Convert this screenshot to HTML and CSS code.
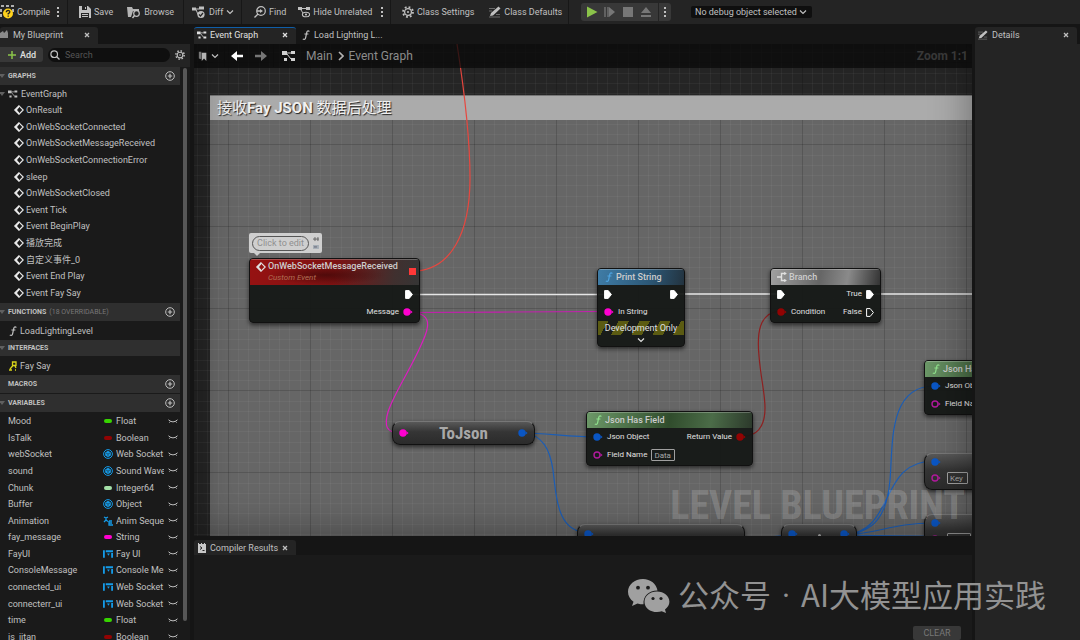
FILE: index.html
```html
<!DOCTYPE html>
<html lang="en">
<head>
    <meta charset="UTF-8">
    <meta name="viewport" content="width=device-width, initial-scale=1.0">
    <title>Level Blueprint</title>
    <link rel="stylesheet" href="styles.css">
</head>
<body>
    <svg class="defs" aria-hidden="true">
        <symbol id="close" viewBox="0 0 6 6"><path d="M1 1l4 4M5 1L1 5" stroke="currentColor" stroke-width="1.3"/></symbol>
        <symbol id="chevron" viewBox="0 0 8 6"><path d="M1 1.5l3 3 3-3" fill="none" stroke="currentColor" stroke-width="1.2"/></symbol>
        <symbol id="dots" viewBox="0 0 4 12"><path d="M1 1h2v2H1zM1 5h2v2H1zM1 9h2v2H1z" fill="currentColor"/></symbol>
        <symbol id="plus-circle" viewBox="0 0 10 10"><circle cx="5" cy="5" r="4.3" fill="none" stroke="currentColor" stroke-width="1"/><path d="M5 2.8v4.4M2.8 5h4.4" stroke="currentColor" stroke-width="1.2"/></symbol>
        <symbol id="event" viewBox="0 0 10 10"><path d="M5 .8L9.2 5 5 9.2.8 5z" fill="none" stroke="currentColor" stroke-width="1.2"/><path d="M5 .4L.4 5 5 9.6V7.2L3.4 5.8V4.2L5 2.8z" fill="currentColor"/></symbol>
        <symbol id="graph" viewBox="0 0 14 12"><path d="M0 1h5v4H0zM9 1h4v3H9zM9 8h4v3H9zM2 8h3v3H2z" fill="currentColor"/><path d="M5 3h4M5 4l4 5" stroke="currentColor" stroke-width="1"/></symbol>
        <symbol id="func" viewBox="0 0 8 10"><path d="M7.4 1.4C6 .4 5 1 4.7 2.6L3.6 7.8C3.3 9.3 2.2 9.8.8 9M2.4 4h4" fill="none" stroke="currentColor" stroke-width="1.2"/></symbol>
        <symbol id="gear" viewBox="0 0 12 12"><circle cx="6" cy="6" r="3.4" fill="none" stroke="currentColor" stroke-width="1.3"/><circle cx="6" cy="6" r="5" fill="none" stroke="currentColor" stroke-width="1.8" stroke-dasharray="1.8 2.13"/><circle cx="6" cy="6" r="1" fill="currentColor"/></symbol>
        <symbol id="pencil" viewBox="0 0 12 12"><path d="M1 10l1-3L9.5.5l2 2L4 9.5z" fill="currentColor"/><path d="M0 2.5h6M0 5h3M0 11h11M7 8.5h4" stroke="currentColor" stroke-width="1" opacity=".45"/></symbol>
        <symbol id="eye" viewBox="0 0 10 5"><path d="M.5.8Q5 5 9.5.8M2.4 2.4L1.4 3.6M7.6 2.4l1 1.2" fill="none" stroke="currentColor" stroke-width="1"/></symbol>
        <symbol id="object" viewBox="0 0 10 10"><circle cx="5" cy="5" r="4.4" fill="none" stroke="currentColor" stroke-width="1"/><path d="M5 1.8l2.8 1.6v3.2L5 8.2 2.2 6.6V3.4z" fill="currentColor"/><path d="M3 4l2 1 2-1M5 5v2.3" fill="none" stroke="#1a1a1a" stroke-width=".5"/></symbol>
        <symbol id="widget" viewBox="0 0 11 8"><path d="M0 0h2v8H0zM3 0h8v2H3zM9 3h2v5H9z" fill="currentColor"/><path d="M4.5 3.5h3L6 6z" fill="currentColor"/></symbol>
        <symbol id="anim" viewBox="0 0 10 10"><path d="M1 1l2 1 2-1M3 2v2L1 6M3 4l2 1.5M6 5h3M6 5v4h4M6 7h3" fill="none" stroke="currentColor" stroke-width="1.3"/></symbol>
        <symbol id="exec" viewBox="0 0 8 9"><path d="M.6.6h3.6L7.4 4.5 4.2 8.4H.6z" stroke="#fff" stroke-width="1"/></symbol>
        <symbol id="pin" viewBox="0 0 10 8"><circle cx="4" cy="4" r="3.7" fill="currentColor"/><path d="M7.5 2.2L9.6 4 7.5 5.8z" fill="currentColor"/></symbol>
        <symbol id="pin-open" viewBox="0 0 10 8"><circle cx="4" cy="4" r="3" fill="none" stroke="currentColor" stroke-width="1.4"/><path d="M7.5 2.2L9.6 4 7.5 5.8z" fill="currentColor"/></symbol>
        <symbol id="branch" viewBox="0 0 10 10"><path d="M0 5h4M9 1.5H4.5v7H9" fill="none" stroke="currentColor" stroke-width="1.4"/><path d="M7 0l3 1.5L7 3zM7 7l3 1.5L7 10z" fill="currentColor"/></symbol>
        <symbol id="arrow" viewBox="0 0 12 10"><path d="M6 0L0 5l6 5V6.3h6V3.7H6z" fill="currentColor"/></symbol>
    </svg>

    <div class="editor">
        <header class="toolbar">
            <div class="toolbar__group toolbar__group_compile">
                <button class="tool"><svg class="icon icon_14" viewBox="0 0 14 14"><path d="M1 1h3M6 1h3M11 1h3M1 4v3M1 9v3M13 4v3" stroke="#b0b0b0" stroke-width="2"/><circle cx="8" cy="8.5" r="5" fill="#ffd21c"/><path d="M6.3 7.2q0-1.7 1.8-1.7t1.7 1.5q0 .9-1.6 1.7v.7M8.2 10.5v1.3" fill="none" stroke="#222" stroke-width="1.3"/></svg>Compile</button>
                <button class="tool tool_more" aria-label="Compile options"><svg class="icon icon_dots"><use href="#dots"/></svg></button>
            </div>
            <div class="toolbar__group toolbar__group_file">
                <button class="tool"><svg class="icon icon_12" viewBox="0 0 12 12"><path d="M0 0h9l3 3v9H0z" fill="#c0c0c0"/><path d="M3 0h5v4H3zM2 7h8v5H2z" fill="#242424"/><path d="M6 1h1v2H6zM3 8h6v1H3zM3 10h6v1H3z" fill="#c0c0c0"/></svg>Save</button>
                <button class="tool"><svg class="icon icon_14" viewBox="0 0 14 12"><path d="M0 1h5l1 2h6v2H6L4 11H1z" fill="#b4b4b4"/><circle cx="9.5" cy="7.5" r="2.8" fill="none" stroke="#c0c0c0" stroke-width="1.2"/><path d="M7.5 9.5L5.5 12" stroke="#c0c0c0" stroke-width="1.5"/></svg>Browse</button>
            </div>
            <div class="toolbar__group toolbar__group_diff">
                <button class="tool"><svg class="icon icon_14" viewBox="0 0 14 13"><path d="M0 2h4v3H0zM7 1h5v3H7z" fill="#c0c0c0"/><path d="M4 3.5h3M4 4l2 5" stroke="#c0c0c0"/><circle cx="9" cy="9" r="3.6" fill="#c0c0c0"/><path d="M7 9l1.5 1.5L11 7.5" fill="none" stroke="#242424" stroke-width="1.2"/></svg>Diff<svg class="icon icon_chevron"><use href="#chevron"/></svg></button>
            </div>
            <div class="toolbar__group toolbar__group_find">
                <button class="tool"><svg class="icon icon_12" viewBox="0 0 12 12"><circle cx="7" cy="5" r="4.3" fill="none" stroke="#c0c0c0" stroke-width="1.2"/><path d="M4 8L.5 11.5M3 5h4" stroke="#c0c0c0" stroke-width="1.4"/><path d="M6 3l3 2-3 2z" fill="#c0c0c0"/></svg>Find</button>
                <button class="tool"><svg class="icon icon_12" viewBox="0 0 12 12"><path d="M0 1h4v3H0zM8 1h4v3H8z" fill="#c0c0c0"/><path d="M4 2.5h4M3 4l2 3" stroke="#c0c0c0"/><ellipse cx="8" cy="8.5" rx="3.6" ry="2.3" fill="none" stroke="#c0c0c0" stroke-width="1.1"/><circle cx="8" cy="8.5" r="1.1" fill="#c0c0c0"/></svg>Hide Unrelated</button>
                <button class="tool tool_more" aria-label="Hide options"><svg class="icon icon_dots"><use href="#dots"/></svg></button>
            </div>
            <div class="toolbar__group toolbar__group_class">
                <button class="tool"><svg class="icon icon_12"><use href="#gear"/></svg>Class Settings</button>
                <button class="tool"><svg class="icon icon_12"><use href="#pencil"/></svg>Class Defaults</button>
            </div>
            <div class="play">
                <button class="play__button play__button_on" aria-label="Play"><svg class="icon icon_12" viewBox="0 0 12 12"><path d="M1 .5L11.5 6 1 11.5z" fill="currentColor"/></svg></button>
                <button class="play__button" aria-label="Step"><svg class="icon icon_12" viewBox="0 0 12 12"><path d="M1 1v10M4 1v10" stroke="currentColor" stroke-width="1.3"/><path d="M5 1l6 5-6 5z" fill="currentColor"/></svg></button>
                <button class="play__button" aria-label="Stop"><svg class="icon icon_12" viewBox="0 0 12 12"><path d="M1 1h10v10H1z" fill="currentColor"/></svg></button>
                <button class="play__button" aria-label="Eject"><svg class="icon icon_12" viewBox="0 0 12 12"><path d="M6 1l5 6H1zM1 9h10v2H1z" fill="currentColor"/></svg></button>
                <button class="play__button play__button_more" aria-label="Play options"><svg class="icon icon_dots"><use href="#dots"/></svg></button>
            </div>
            <div class="debug">
                <select class="debug__select" aria-label="Debug object"><option>No debug object selected</option></select>
                <svg class="icon icon_chevron"><use href="#chevron"/></svg>
            </div>
        </header>

        <div class="workspace">
            <aside class="blueprint">
                <div class="tabs">
                    <div class="tab tab_blueprint"><svg class="icon icon_10" viewBox="0 0 10 10"><path d="M0 3l3-2 1 2 3-3 1 3v5H0z" fill="#8a8a8a"/></svg><span class="tab__name">My Blueprint</span><button class="tab__close" aria-label="Close My Blueprint"><svg class="icon icon_6"><use href="#close"/></svg></button></div>
                </div>
                <div class="search">
                    <button class="search__add"><svg class="icon icon_10" viewBox="0 0 10 10"><path d="M5 1v8M1 5h8" stroke="#8bc34a" stroke-width="1.5"/></svg>Add</button>
                    <label class="search__box"><svg class="icon icon_10" viewBox="0 0 10 10"><circle cx="4.2" cy="4.2" r="3.3" fill="none" stroke="#c0c0c0" stroke-width="1.2"/><path d="M6.7 6.7L9.5 9.5" stroke="#c0c0c0" stroke-width="1.3"/></svg><input class="search__input" type="text" placeholder="Search" aria-label="Search"></label>
                    <button class="round" aria-label="View options"><svg class="icon icon_10"><use href="#gear"/></svg></button>
                </div>
                <div class="outline">
                    <div class="outline__list">
                        <h2 class="section"><span class="section__arrow"></span>GRAPHS<button class="round" aria-label="Add graph"><svg class="icon icon_10"><use href="#plus-circle"/></svg></button></h2>
                        <p class="entry entry_root"><span class="section__arrow"></span><svg class="icon icon_10"><use href="#graph"/></svg>EventGraph</p>
                        <ul class="events">
                            <li class="entry entry_event"><svg class="icon icon_10"><use href="#event"/></svg>OnResult</li>
                            <li class="entry entry_event"><svg class="icon icon_10"><use href="#event"/></svg>OnWebSocketConnected</li>
                            <li class="entry entry_event"><svg class="icon icon_10"><use href="#event"/></svg>OnWebSocketMessageReceived</li>
                            <li class="entry entry_event"><svg class="icon icon_10"><use href="#event"/></svg>OnWebSocketConnectionError</li>
                            <li class="entry entry_event"><svg class="icon icon_10"><use href="#event"/></svg>sleep</li>
                            <li class="entry entry_event"><svg class="icon icon_10"><use href="#event"/></svg>OnWebSocketClosed</li>
                            <li class="entry entry_event"><svg class="icon icon_10"><use href="#event"/></svg>Event Tick</li>
                            <li class="entry entry_event"><svg class="icon icon_10"><use href="#event"/></svg>Event BeginPlay</li>
                            <li class="entry entry_event"><svg class="icon icon_10"><use href="#event"/></svg>播放完成</li>
                            <li class="entry entry_event"><svg class="icon icon_10"><use href="#event"/></svg>自定义事件_0</li>
                            <li class="entry entry_event"><svg class="icon icon_10"><use href="#event"/></svg>Event End Play</li>
                            <li class="entry entry_event"><svg class="icon icon_10"><use href="#event"/></svg>Event Fay Say</li>
                        </ul>
                        <h2 class="section"><span class="section__arrow"></span>FUNCTIONS <span class="section__note">(18 OVERRIDABLE)</span><button class="round" aria-label="Add function"><svg class="icon icon_10"><use href="#plus-circle"/></svg></button></h2>
                        <p class="entry entry_item"><svg class="icon icon_8"><use href="#func"/></svg>LoadLightingLevel</p>
                        <h2 class="section section_small"><span class="section__arrow"></span>INTERFACES</h2>
                        <p class="entry entry_item"><svg class="icon icon_8" viewBox="0 0 8 10"><path d="M3.5 1H7v3.5H3.5zM4 4.5L1 8M6 5l1 2M0 9h3M6 9h1" fill="none" stroke="#d8d41a" stroke-width="1.3"/></svg>Fay Say</p>
                        <h2 class="section"><span class="section__arrow section__arrow_none"></span>MACROS<button class="round" aria-label="Add macro"><svg class="icon icon_10"><use href="#plus-circle"/></svg></button></h2>
                        <h2 class="section"><span class="section__arrow"></span>VARIABLES<button class="round" aria-label="Add variable"><svg class="icon icon_10"><use href="#plus-circle"/></svg></button></h2>
                        <ul class="variables">
                            <li class="variable"><span>Mood</span><i class="pill pill_float"></i><span class="variable__type">Float</span><svg class="icon icon_eye"><use href="#eye"/></svg></li>
                            <li class="variable"><span>IsTalk</span><i class="pill pill_bool"></i><span class="variable__type">Boolean</span><svg class="icon icon_eye"><use href="#eye"/></svg></li>
                            <li class="variable"><span>webSocket</span><svg class="icon icon_10 blue"><use href="#object"/></svg><span class="variable__type">Web Socket</span><svg class="icon icon_eye"><use href="#eye"/></svg></li>
                            <li class="variable"><span>sound</span><svg class="icon icon_10 blue"><use href="#object"/></svg><span class="variable__type">Sound Wave</span><svg class="icon icon_eye"><use href="#eye"/></svg></li>
                            <li class="variable"><span>Chunk</span><i class="pill pill_int"></i><span class="variable__type">Integer64</span><svg class="icon icon_eye"><use href="#eye"/></svg></li>
                            <li class="variable"><span>Buffer</span><svg class="icon icon_10 blue"><use href="#object"/></svg><span class="variable__type">Object</span><svg class="icon icon_eye"><use href="#eye"/></svg></li>
                            <li class="variable"><span>Animation</span><svg class="icon icon_10 blue"><use href="#anim"/></svg><span class="variable__type">Anim Seque</span><svg class="icon icon_eye"><use href="#eye"/></svg></li>
                            <li class="variable"><span>fay_message</span><i class="pill pill_string"></i><span class="variable__type">String</span><svg class="icon icon_eye"><use href="#eye"/></svg></li>
                            <li class="variable"><span>FayUI</span><svg class="icon icon_10 blue"><use href="#widget"/></svg><span class="variable__type">Fay UI</span><svg class="icon icon_eye"><use href="#eye"/></svg></li>
                            <li class="variable"><span>ConsoleMessage</span><svg class="icon icon_10 blue"><use href="#widget"/></svg><span class="variable__type">Console Me</span><svg class="icon icon_eye"><use href="#eye"/></svg></li>
                            <li class="variable"><span>connected_ui</span><svg class="icon icon_10 blue"><use href="#widget"/></svg><span class="variable__type">Web Socket</span><svg class="icon icon_eye"><use href="#eye"/></svg></li>
                            <li class="variable"><span>connecterr_ui</span><svg class="icon icon_10 blue"><use href="#widget"/></svg><span class="variable__type">Web Socket</span><svg class="icon icon_eye"><use href="#eye"/></svg></li>
                            <li class="variable"><span>time</span><i class="pill pill_float"></i><span class="variable__type">Float</span><svg class="icon icon_eye"><use href="#eye"/></svg></li>
                            <li class="variable"><span>is_jitan</span><i class="pill pill_bool"></i><span class="variable__type">Boolean</span><svg class="icon icon_eye"><use href="#eye"/></svg></li>
                        </ul>
                    </div>
                    <div class="scroll"><div class="scroll__thumb"></div></div>
                </div>
            </aside>

            <main class="center">
                <div class="tabs">
                    <div class="tab tab_active"><svg class="icon icon_10"><use href="#graph"/></svg><span class="tab__name">Event Graph</span><button class="tab__close" aria-label="Close Event Graph"><svg class="icon icon_6"><use href="#close"/></svg></button></div>
                    <div class="tab tab_plain"><svg class="icon icon_8"><use href="#func"/></svg><span class="tab__name">Load Lighting L...</span></div>
                </div>
                <section class="canvas">
                    <svg class="canvas__layer">
                        <defs>
                            <pattern id="grid" x="34" y="18" width="82" height="82" patternUnits="userSpaceOnUse">
                                <path d="M10.5 0v82M20.5 0v82M31.5 0v82M41.5 0v82M51.5 0v82M61.5 0v82M72.5 0v82M0 11.5h82M0 21.5h82M0 31.5h82M0 41.5h82M0 52.5h82M0 62.5h82M0 72.5h82" stroke="#fff" stroke-opacity=".04"/>
                                <path d="M.5 0v82M0 .5h82" stroke="#000" stroke-opacity=".16"/>
                            </pattern>
                        </defs>
                        <rect width="100%" height="100%" fill="#262626"/>
                        <rect x="16" y="51" width="100%" height="100%" fill="#666"/>
                        <rect width="100%" height="100%" fill="url(#grid)"/>
                    </svg>
                    <h1 class="comment">接收<b>Fay JSON</b> 数据后处理</h1>
                    <!-- wires between the pins -->
                    <svg class="canvas__layer">
                        <g transform="translate(-194 -44)" fill="none" stroke-width="1.2">
                            <path d="M457 44C462 76 470 130 470 178C470 235 450 268 417 271" stroke="#e8473f"/>
                            <path d="M410 294.5H604M676 294H778M873 294H1400" stroke="#e6e6e6" stroke-width="1.6"/>
                            <path d="M409 312.5C480 312.5 530 311.5 604 311.5" stroke="#c51fae"/>
                            <path d="M409 312C434 313 429 328 422 343C411 369 394 393 388 412C384 426 386 433 401 433" stroke="#dd1cc0"/>
                            <path d="M781 311C758 312 757 335 759 356C761 380 765 393 765 408C765 428 756 437 741 436" stroke="#8e2020"/>
                            <path d="M522 433C545 433 570 437 597 437M522 433C543 434 550 450 553 470C557 505 559 533 590 533" stroke="#1b5db5"/>
                            <path d="M843 535C875 533 887 515 890 480C893 445 888 386 934 386M843 535C897 533 877 461 934 461M843 535C880 534 890 523 934 523M843 535L972 537M770 537L790 535" stroke="#1b5db5"/>
                        </g>
                    </svg>

                    <div class="bubble"><button class="bubble__edit">Click to edit</button><svg class="bubble__icons" viewBox="0 0 6 16"><path d="M0 4h6M2 2v4M5 2v4" stroke="#666"/><path d="M0 10h6v4H0z" fill="#a4adb5"/><path d="M1 12h3" stroke="#667"/></svg></div>

                    <article class="node node_message">
                        <header class="node__head node__head_event">
                            <svg class="icon icon_10"><use href="#event"/></svg>
                            <div class="node__titles"><h3 class="node__title">OnWebSocketMessageReceived</h3><p class="node__sub">Custom Event</p></div>
                            <i class="delegate"></i>
                        </header>
                        <div class="node__row node__row_out"><svg class="icon icon_exec"><use href="#exec"/></svg></div>
                        <div class="node__row node__row_out"><span>Message</span><svg class="icon icon_pin pink"><use href="#pin"/></svg></div>
                    </article>

                    <article class="node node_print">
                        <header class="node__head node__head_print"><svg class="icon icon_10 sky"><use href="#func"/></svg><h3 class="node__title">Print String</h3></header>
                        <div class="node__row"><svg class="icon icon_exec"><use href="#exec"/></svg><svg class="icon icon_exec push"><use href="#exec"/></svg></div>
                        <div class="node__row"><svg class="icon icon_pin pink"><use href="#pin"/></svg><span>In String</span></div>
                        <p class="node__dev">Development Only</p>
                        <button class="node__more" aria-label="Show more"><svg class="icon icon_chevron"><use href="#chevron"/></svg></button>
                    </article>

                    <article class="node node_branch">
                        <header class="node__head node__head_branch"><svg class="icon icon_10"><use href="#branch"/></svg><h3 class="node__title">Branch</h3></header>
                        <div class="node__row"><svg class="icon icon_exec"><use href="#exec"/></svg><span class="push">True</span><svg class="icon icon_exec"><use href="#exec"/></svg></div>
                        <div class="node__row"><svg class="icon icon_pin red"><use href="#pin"/></svg><span>Condition</span><span class="push">False</span><svg class="icon icon_exec icon_empty"><use href="#exec"/></svg></div>
                    </article>

                    <article class="node node_compact node_tojson">
                        <svg class="icon icon_pin pink"><use href="#pin"/></svg><h3 class="node__big">ToJson</h3><svg class="icon icon_pin navy"><use href="#pin"/></svg>
                    </article>

                    <article class="node node_field">
                        <header class="node__head node__head_pure"><svg class="icon icon_10 green"><use href="#func"/></svg><h3 class="node__title">Json Has Field</h3></header>
                        <div class="node__row"><svg class="icon icon_pin navy"><use href="#pin"/></svg><span>Json Object</span><span class="push">Return Value</span><svg class="icon icon_pin red"><use href="#pin"/></svg></div>
                        <div class="node__row"><svg class="icon icon_pin purple"><use href="#pin-open"/></svg><label for="field-name">Field Name</label><input class="node__input" id="field-name" value="Data"></div>
                    </article>

                    <article class="node node_field2">
                        <header class="node__head node__head_pure"><svg class="icon icon_10 green"><use href="#func"/></svg><h3 class="node__title">Json Has Field</h3></header>
                        <div class="node__row"><svg class="icon icon_pin navy"><use href="#pin"/></svg><span>Json Object</span></div>
                        <div class="node__row"><svg class="icon icon_pin purple"><use href="#pin-open"/></svg><span>Field Name</span></div>
                    </article>

                    <article class="node node_compact node_key">
                        <div class="node__row"><svg class="icon icon_pin navy"><use href="#pin"/></svg></div>
                        <div class="node__row"><svg class="icon icon_pin purple"><use href="#pin-open"/></svg><input class="node__input node__input_key" value="Key" aria-label="Key"></div>
                    </article>

                    <article class="node node_compact node_key node_key2">
                        <div class="node__row"><svg class="icon icon_pin navy"><use href="#pin"/></svg></div>
                        <div class="node__row"><svg class="icon icon_pin purple"><use href="#pin-open"/></svg><input class="node__input" aria-label="Key"></div>
                    </article>

                    <article class="node node_compact node_wide"><svg class="icon icon_pin navy"><use href="#pin"/></svg></article>
                    <article class="node node_compact node_dot"><svg class="icon icon_pin navy"><use href="#pin"/></svg><i class="node__dot"></i><svg class="icon icon_pin navy"><use href="#pin"/></svg></article>

                    <div class="vignette"></div>
                    <p class="canvas__mark">LEVEL BLUEPRINT</p>
                    <nav class="crumbs">
                        <button class="crumbs__button crumbs__button_mark" aria-label="Bookmarks"><svg class="icon icon_10" viewBox="0 0 10 12"><path d="M0 1h3v9L0 9z" fill="#777"/><path d="M3.5 2H9v10L6.2 9l-2.7 3z" fill="#b4b4b4"/></svg><svg class="icon icon_chevron"><use href="#chevron"/></svg></button>
                        <button class="crumbs__button crumbs__button_back" aria-label="Back"><svg class="icon icon_12"><use href="#arrow"/></svg></button>
                        <button class="crumbs__button crumbs__button_next" aria-label="Forward"><svg class="icon icon_12 flip"><use href="#arrow"/></svg></button>
                        <span class="crumbs__path"><svg class="icon icon_14"><use href="#graph"/></svg><a class="crumbs__link" href="#main">Main</a><svg class="icon icon_next" viewBox="0 0 6 10"><path d="M1 1l4 4-4 4" fill="none" stroke="#b4b4b4" stroke-width="1.6"/></svg><a class="crumbs__link" href="#graph">Event Graph</a></span>
                        <span class="crumbs__zoom">Zoom 1:1</span>
                    </nav>
                </section>
                <section class="results">
                    <div class="tabs tabs_results">
                        <div class="tab tab_results"><svg class="icon icon_10" viewBox="0 0 10 10"><path d="M1 0h1v1h2V0h1v1h2V0h1v1h1v9H1z" fill="#c8c8c8"/><path d="M3 3.5l2 1.5-2 1.5M5.5 7.5h2" fill="none" stroke="#222"/></svg><span class="tab__name">Compiler Results</span><button class="tab__close" aria-label="Close Compiler Results"><svg class="icon icon_6"><use href="#close"/></svg></button></div>
                    </div>
                    <div class="results__body"><button class="results__clear">CLEAR</button></div>
                </section>
            </main>

            <aside class="details">
                <div class="tabs">
                    <div class="tab tab_details"><svg class="icon icon_10"><use href="#pencil"/></svg><span class="tab__name">Details</span><button class="tab__close" aria-label="Close Details"><svg class="icon icon_6"><use href="#close"/></svg></button></div>
                </div>
                <div class="details__body"></div>
            </aside>
        </div>
        <div class="account">
            <svg class="account__logo" viewBox="0 0 42 34"><path d="M15 0C6.5 0 0 5.7 0 12.8c0 4 2 7.5 5.5 9.9L4 27l5.5-2.6c2 .6 4 .8 6 .8C15 17 21 11.5 29.5 11.6 28.5 5 22.5 0 15 0z" fill="currentColor"/><path d="M29 12.5c-7.2 0-12.5 4.6-12.5 10.4S22 33 29 33c1.7 0 3.3-.2 4.8-.7L38 34l-1-3.6c2.7-2 4.4-4.7 4.4-7.7 0-5.7-5.4-10.2-12.4-10.2z" fill="currentColor"/><g fill="#1c1c1c"><circle cx="10" cy="8.7" r="1.9"/><circle cx="20" cy="8.7" r="1.9"/><circle cx="25" cy="19.5" r="1.6"/><circle cx="33" cy="19.5" r="1.6"/></g></svg>
            <span>公众号 <span class="account__dot">·</span> AI大模型应用实践</span>
        </div>
    </div>
</body>
</html>
```
FILE: styles.css
```css
body {
    margin: 0;
    font-family: Roboto, "Noto Sans CJK SC", sans-serif;
    font-size: 9px;
    line-height: 16px;
    color: #c0c0c0;
    background-color: #151515;
}

h1, h2, h3, p, ul {
    margin: 0;
    padding: 0;
    font-size: inherit;
    font-weight: 400;
}

ul {
    list-style-type: none;
}

a {
    text-decoration: none;
}

button, input, select {
    margin: 0;
    padding: 0;
    border: 0;
    background: none;
    color: inherit;
    font: inherit;
}

button {
    display: flex;
    align-items: center;
}

/* icons */

.defs {
    position: absolute;
    width: 0;
    height: 0;
}

.icon {
    flex: none;
    display: block;
}

.icon_6 { width: 6px; height: 6px; }
.icon_8 { width: 8px; height: 10px; }
.icon_10 { width: 10px; height: 10px; }
.icon_12 { width: 12px; height: 12px; }
.icon_14 { width: 14px; height: 14px; }
.icon_dots { width: 4px; height: 12px; }
.icon_chevron { width: 8px; height: 6px; }
.icon_next { width: 6px; height: 10px; }
.icon_eye { width: 10px; height: 5px; }
.icon_exec { width: 8px; height: 9px; fill: #fff; }
.icon_pin { width: 10px; height: 8px; }
.icon_empty { fill: none; }

.blue { color: #159be8; }
.pink { color: #ff00d0; }
.purple { color: #b01a9c; }
.red { color: #920303; }
.navy { color: #0a56c4; }
.sky { color: #4da3e0; }
.green { color: #8fe08c; }

.push { margin-left: auto; }
.flip { transform: scaleX(-1); }

/* page */

.editor {
    display: flex;
    flex-direction: column;
    height: 100vh;
    overflow: hidden;
}

.toolbar {
    display: flex;
    align-items: center;
    flex: none;
    height: 24px;
    background-color: #242424;
}

.toolbar__group {
    display: flex;
    align-items: center;
    height: 24px;
    box-sizing: border-box;
    border-right: 1px solid #171717;
}

.toolbar__group_compile { width: 68px; gap: 10px; }
.toolbar__group_file { width: 116px; padding-left: 11px; gap: 14px; }
.toolbar__group_diff { width: 58px; padding-left: 8px; }
.toolbar__group_find { width: 149px; padding-left: 12px; gap: 12px; }
.toolbar__group_class { width: 178px; padding-left: 11px; gap: 15px; }

.tool {
    gap: 3px;
    white-space: nowrap;
}

.tool_more {
    margin-left: -4px;
}

.play {
    display: flex;
    flex: none;
    align-items: center;
    height: 18px;
    margin: 0 8px 0 12px;
    padding-left: 5px;
    gap: 6px;
    border-radius: 3px;
    background-color: #383838;
}

.play__button {
    color: #777777;
}

.play__button_on {
    color: #8bc34a;
}

.play__button_more {
    height: 18px;
    padding: 0 4px;
    border-left: 1px solid #242424;
    color: #c0c0c0;
}

.debug {
    display: flex;
    align-items: center;
    margin-left: 12px;
    padding: 0 5px 0 4px;
    height: 12px;
    border-radius: 2px;
    background-color: #0f0f0f;
}

.debug__select {
    appearance: none;
    width: 104px;
    line-height: 12px;
}

.workspace {
    display: flex;
    flex: 1;
    min-height: 0;
}

.tabs {
    display: flex;
    flex: none;
    align-items: flex-end;
    height: 20px;
    background-color: #151515;
}

.tab {
    display: flex;
    align-items: center;
    box-sizing: border-box;
    height: 17px;
    padding: 0 8px 2px 3px;
    gap: 3px;
    border-radius: 3px 3px 0 0;
    background-color: #242424;
}

.tab__name {
    flex: 1;
    white-space: nowrap;
}

.tab_blueprint { width: 98px; padding-left: 0; }
.tab_active { width: 102px; border-top: 1px solid #0f5ea8; color: #e0e0e0; }
.tab_plain { background: none; padding-left: 6px; gap: 4px; }
.tab_details { width: 102px; gap: 4px; }

/* left panel */

.blueprint {
    display: flex;
    flex-direction: column;
    flex: none;
    width: 190px;
    margin-right: 4px;
    min-height: 0;
}

.search {
    display: flex;
    align-items: center;
    flex: none;
    height: 23px;
    box-sizing: border-box;
    padding: 0 5px 2px 0;
    gap: 5px;
    background-color: #242424;
}

.search__add {
    width: 43px;
    height: 15px;
    justify-content: center;
    gap: 3px;
    border-radius: 0 3px 3px 0;
    background-color: #383838;
    color: #e0e0e0;
    font-weight: 500;
}

.search__box {
    display: flex;
    align-items: center;
    box-sizing: border-box;
    width: 122px;
    height: 14px;
    padding-left: 2px;
    gap: 5px;
    border-radius: 7px;
    background-color: #0f0f0f;
}

.search__input {
    width: 90px;
    outline: 0;
}

.search__input::placeholder {
    color: #555555;
}

.outline {
    display: flex;
    flex: 1;
    min-height: 0;
    background-color: #1a1a1a;
}

.outline__list {
    flex: 1;
    overflow: hidden;
}

.section {
    display: flex;
    align-items: center;
    height: 18px;
    margin-bottom: 1px;
    padding-right: 5px;
    gap: 3px;
    background-color: #2f2f2f;
    font-size: 7px;
    font-weight: 700;
}

.section_small {
    height: 16px;
}

.section__note {
    color: #777777;
    font-weight: 400;
}

.section__arrow {
    border: 3px solid transparent;
    border-top: 4px solid #606060;
    border-bottom: 0;
    margin-left: -1px;
}

.section__arrow_none {
    visibility: hidden;
}

.round {
    margin-left: auto;
}

.entry {
    display: flex;
    align-items: center;
    white-space: nowrap;
}

.entry_root { height: 16px; gap: 3px; }
.entry_item { height: 18px; padding-left: 9px; gap: 3px; }
.entry_event { padding-left: 14px; gap: 2px; }
.entry_event .icon { color: #e8e8e8; }

.events {
    display: grid;
    grid-auto-rows: 1fr;
    min-height: 199px;
    padding-bottom: 2px;
}

.variables {
    display: grid;
    grid-auto-rows: 1fr;
    min-height: 232px;
}

.variable {
    display: grid;
    grid-template-columns: 92px 10px 49px 10px;
    align-items: center;
    justify-items: start;
    column-gap: 3px;
    padding-left: 8px;
}

.variable__type {
    width: 48px;
    overflow: hidden;
    white-space: nowrap;
}

.pill {
    justify-self: center;
    width: 8px;
    height: 4px;
    border-radius: 2px;
}

.pill_float { background-color: #37d400; }
.pill_bool { background-color: #920303; }
.pill_int { background-color: #a5e0a8; }
.pill_string { background-color: #ff00d0; }

.scroll {
    display: flex;
    flex: none;
    width: 4px;
    padding: 1px 3px 19px;
    background-color: #1a1a1a;
}

.scroll__thumb {
    flex: 1;
    border-radius: 2px;
    background-color: #575757;
}

/* graph */

.center {
    display: flex;
    flex: 1;
    flex-direction: column;
    min-width: 0;
}

.canvas {
    position: relative;
    flex: 1;
    min-height: 0;
    overflow: hidden;
}

.canvas__layer {
    position: absolute;
    top: 0;
    left: 0;
    width: 100%;
    height: 100%;
}

.comment {
    position: absolute;
    top: 51px;
    left: 16px;
    right: 0;
    padding-left: 7px;
    border-top: 1px solid #777777;
    background-color: #ababab;
    color: #f0f0f0;
    font-size: 15px;
    line-height: 24px;
    text-shadow: 1px 1px 1px #222222;
}

.vignette {
    position: absolute;
    inset: 0;
    box-shadow: inset 0 0 40px rgba(0, 0, 0, 0.4);
    pointer-events: none;
}

.canvas__mark {
    position: absolute;
    right: 7px;
    bottom: 10px;
    color: rgba(255, 255, 255, 0.18);
    font-family: "Roboto Condensed", Roboto, sans-serif;
    font-size: 40px;
    font-weight: 700;
    line-height: 40px;
}

.crumbs {
    position: absolute;
    top: 0;
    left: 0;
    right: 0;
    display: flex;
    align-items: center;
    height: 24px;
    padding-bottom: 1px;
    box-sizing: border-box;
    background-color: rgba(10, 10, 10, 0.75);
}

.crumbs__button {
    height: 23px;
    padding: 0 6px;
}

.crumbs__button_mark {
    padding: 0 5px 0 4px;
    gap: 3px;
    border-right: 1px solid #0d0d0d;
}

.crumbs__button_back { color: #ffffff; }
.crumbs__button_next { color: #777777; border-right: 1px solid #0d0d0d; }

.crumbs__path {
    display: flex;
    align-items: center;
    padding-left: 8px;
    gap: 5px;
    font-size: 12px;
}

.crumbs__path .icon_14 { margin-right: 5px; color: #d0d0d0; }

.crumbs__link { color: #8c8c8c; }

.crumbs__zoom {
    margin-left: auto;
    padding-right: 4px;
    color: #383838;
    font-size: 12px;
    font-weight: 700;
}

.bubble {
    position: absolute;
    top: 189px;
    left: 55px;
    display: flex;
    align-items: center;
    box-sizing: border-box;
    width: 73px;
    height: 20px;
    padding: 0 3px;
    gap: 4px;
    border-radius: 2px;
    background-color: #cfcfcf;
}

.bubble::after {
    content: "";
    position: absolute;
    top: 20px;
    left: 5px;
    border: 3px solid transparent;
    border-top-color: #cfcfcf;
    border-bottom: 0;
}

.bubble__edit {
    box-sizing: border-box;
    width: 58px;
    height: 15px;
    justify-content: center;
    border: 1px solid #555555;
    border-radius: 8px;
    color: #909090;
    white-space: nowrap;
}

.bubble__icons {
    width: 6px;
    height: 16px;
}

.node {
    position: absolute;
    box-sizing: border-box;
    border: 1px solid #111111;
    border-radius: 4px;
    background-color: rgba(20, 23, 21, 0.94);
    box-shadow: 0 2px 4px rgba(0, 0, 0, 0.6);
    color: #e0e0e0;
    font-size: 8px;
    overflow: hidden;
    white-space: nowrap;
}

.node_message { top: 214px; left: 55px; width: 171px; height: 65px; }
.node_print { top: 224px; left: 403px; width: 88px; height: 79px; }
.node_branch { top: 224px; left: 576px; width: 111px; height: 55px; }
.node_field { top: 367px; left: 392px; width: 167px; height: 55px; }
.node_field2 { top: 316px; left: 730px; width: 167px; height: 55px; }
.node_tojson { top: 377px; left: 198px; width: 143px; height: 24px; }
.node_key { top: 409px; left: 730px; width: 143px; height: 37px; }
.node_key2 { top: 470px; }
.node_wide { top: 480px; left: 383px; width: 168px; height: 24px; }
.node_dot { top: 480px; left: 587px; width: 76px; height: 24px; }

.node__head {
    display: flex;
    align-items: center;
    box-sizing: border-box;
    height: 16px;
    padding: 0 6px 2px;
    gap: 2px;
    border-top: 1px solid rgba(255, 255, 255, 0.25);
    font-size: 9px;
    line-height: 12px;
}

.node__head_event {
    height: 26px;
    background: radial-gradient(ellipse at 45% 60%, rgba(50, 5, 5, 0.6), transparent 45%), linear-gradient(100deg, #971212 0%, #7c1212 50%, #40302f 85%, #353535 100%);
}

.node__head_event .icon { margin-bottom: 9px; }

.node__head_print { background: linear-gradient(100deg, #3f7ca6, #2c5877 60%, #23333f); }
.node__head_branch { background: linear-gradient(100deg, #a0a0a0, #666666 45%, #8a8a8a 70%, #333333); }
.node__head_pure { background: linear-gradient(100deg, #6c9868, #304c2c 50%, #4b6c48 75%, #2c392b); }

.node__title {
    color: #cccccc;
    font-weight: 500;
}

.node__sub {
    color: #b07055;
    font-size: 8px;
    font-style: italic;
    line-height: 11px;
}

.delegate {
    width: 7px;
    height: 7px;
    margin-left: auto;
    margin-right: -3px;
    background-color: #ff3838;
}

.node__row {
    display: flex;
    align-items: center;
    height: 18px;
    padding: 0 6px;
    gap: 4px;
}

.node__row_out {
    justify-content: flex-end;
}

.node__input {
    box-sizing: border-box;
    width: 24px;
    height: 12px;
    padding: 0 2px;
    border: 1px solid #a0a0a0;
    border-radius: 1px;
    color: #a8a8a8;
    line-height: 10px;
}

.node__input_key {
    width: 21px;
}

.node__dev {
    height: 14px;
    background: repeating-linear-gradient(120deg, #5b5b12 0 9px, transparent 9px 18px);
    font-size: 9px;
    line-height: 14px;
    text-align: center;
}

.node__more {
    margin: 2px auto 0;
}

.node_compact {
    border-radius: 8px;
    border-top-color: #777777;
    background: linear-gradient(#585858, #353535 45%, #2b2b2b);
}

.node_compact .node__row {
    height: 16px;
    gap: 6px;
}

.node_tojson, .node_wide, .node_dot {
    display: flex;
    align-items: center;
    justify-content: space-between;
    padding: 0 6px;
}

.node_wide, .node_dot {
    align-items: flex-start;
    padding-top: 5px;
}

.node__big {
    color: #a8a8a8;
    font-family: "Roboto Condensed", Roboto, sans-serif;
    font-size: 17px;
    font-weight: 700;
}

.node__dot {
    width: 3px;
    height: 3px;
    margin-top: 4px;
    border-radius: 2px;
    background-color: #aaaaaa;
}

/* bottom and right panels */

.results {
    display: flex;
    flex: none;
    flex-direction: column;
    height: 104px;
}

.tabs_results {
    height: 19px;
}

.tab_results {
    width: 102px;
    height: 15px;
    padding-bottom: 0;
}

.results__body {
    display: flex;
    flex: 1;
    align-items: flex-end;
    justify-content: flex-end;
    padding-right: 11px;
    background-color: #1a1a1a;
}

.results__clear {
    width: 48px;
    height: 14px;
    justify-content: center;
    border-radius: 2px;
    background-color: #383838;
    color: #777777;
}

.details {
    display: flex;
    flex: none;
    flex-direction: column;
    width: 105px;
    margin-left: 3px;
}

.details__body {
    flex: 1;
    background-color: #242424;
}

.account {
    position: absolute;
    right: 34px;
    bottom: 20px;
    display: flex;
    align-items: center;
    gap: 8px;
    color: #929292;
    font-family: "Noto Sans CJK SC", sans-serif;
    font-size: 31px;
    font-weight: 400;
    line-height: 46px;
    white-space: nowrap;
}

.account__dot {
    margin: 0 4px;
    font-family: Roboto, sans-serif;
}

.account__logo {
    width: 42px;
    height: 34px;
    color: #a0a0a0;
}
```
